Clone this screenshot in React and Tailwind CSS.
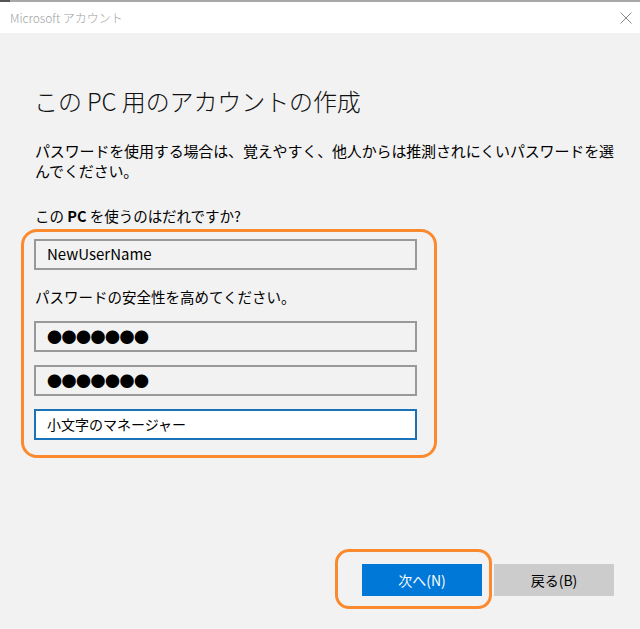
import React from "react";

function Field({ children, active }) {
  return (
    <div
      className={
        "h-[31px] w-[383px] flex items-center pl-[11px] text-[15px] text-black border-2 " +
        (active ? "bg-white border-[#1a73b8]" : "bg-[#f2f2f2] border-[#999999]")
      }
    >
      {children}
    </div>
  );
}

function Dots() {
  return (
    <span className="text-[15px] tracking-[-0.5px] leading-none" style={{ fontFamily: '"Noto Sans CJK JP", sans-serif' }}>
      ●●●●●●●
    </span>
  );
}

export default function App() {
  return (
    <div className="w-[640px] h-[629px] flex flex-col bg-[#f2f2f2] overflow-hidden" style={{ fontFamily: '"Noto Sans CJK JP", "Noto Sans", sans-serif' }}>
      {/* window top edge */}
      <div className="h-[2px] bg-[#a8a8a8] flex">
        <div className="w-[10px] h-[2px] bg-[#555555]" />
      </div>
      {/* title bar */}
      <div className="h-[31px] bg-white flex items-center justify-between pl-[10px] pr-[7px]">
        <span className="text-[12px] text-[#a0a0a0] font-light">Microsoft アカウント</span>
        <svg width="12" height="12" viewBox="0 0 12 12" className="mr-[1px]">
          <path d="M0.5 0.5 L11.5 11.5 M11.5 0.5 L0.5 11.5" stroke="#8a8a8a" strokeWidth="1" />
        </svg>
      </div>

      {/* content */}
      <div className="flex-1 flex flex-col">
        <h1 className="mt-[54px] ml-[34px] text-[24px] leading-[28px] font-light text-[#111111] tracking-[-0.1px]">
          この PC 用のアカウントの作成
        </h1>
        <p className="mt-[26px] ml-[35px] w-[588px] text-[15px] leading-[20px] text-black tracking-[-0.15px]">
          パスワードを使用する場合は、覚えやすく、他人からは推測されにくいパスワードを選<br />んでください。
        </p>
        <div className="mt-[25px] ml-[35px] text-[14.5px] leading-[20px] text-black">
          この <span className="font-bold">PC</span> を使うのはだれですか?
        </div>

        <div className="mt-[3px] ml-[21px] w-[416px] h-[229px] border-[3px] border-[#fb8a2e] rounded-[16px] pt-[7px] pl-[10px] flex flex-col">
          <Field>NewUserName</Field>
          <div className="mt-[17px] ml-[1px] text-[14.5px] leading-[20px] text-black">
            パスワードの安全性を高めてください。
          </div>
          <div className="mt-[14px]">
            <Field><Dots /></Field>
          </div>
          <div className="mt-[13px]">
            <Field><Dots /></Field>
          </div>
          <div className="mt-[13px]">
            <Field active>
              <span className="text-[14px]">小文字のマネージャー</span>
            </Field>
          </div>
        </div>

        <div className="mt-[106px] flex justify-end gap-[12px] pr-[26px]">
          <div className="relative">
            <span className="absolute left-[-27px] top-[-15px] right-[-10px] bottom-[-13px] border-[3px] border-[#fb8a2e] rounded-[14px]" />
            <button className="relative w-[120px] h-[32px] bg-[#0078d7] text-white text-[14px]">
              次へ(N)
            </button>
          </div>
          <button className="w-[120px] h-[32px] bg-[#cccccc] text-black text-[14px]">
            戻る(B)
          </button>
        </div>
      </div>
    </div>
  );
}
